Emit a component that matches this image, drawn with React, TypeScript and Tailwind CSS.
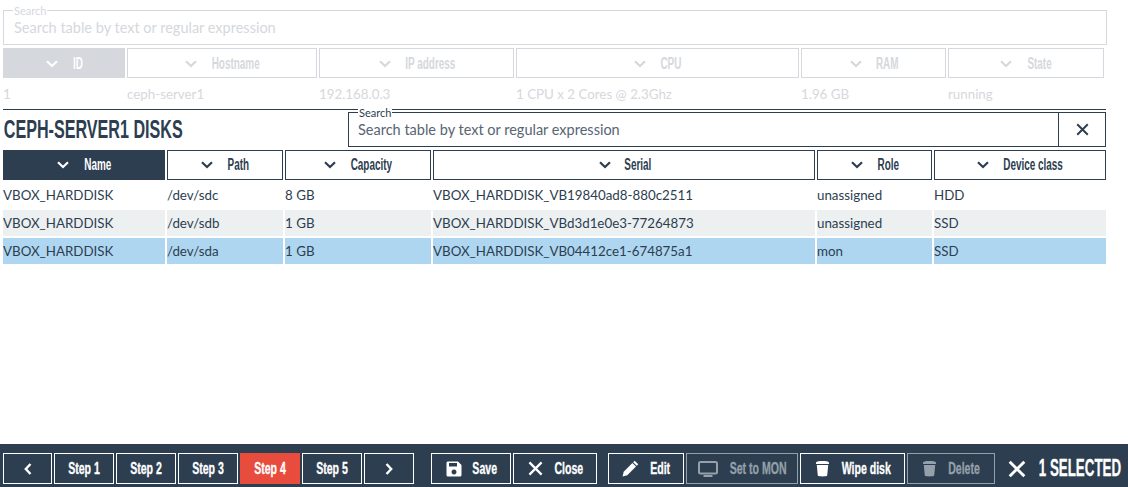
import React from "react";

const OSW = "font-['Liberation_Sans',sans-serif] font-bold";

/* Condensed display text: no condensed face is installed, so the label is narrowed; w is its visual width. */
function N({ w, children, s = "scale-x-[0.62]" }: { w: number; children: React.ReactNode; s?: string }) {
  return (
    <span className="inline-flex justify-center shrink-0" style={{ width: w }}>
      <span className={`inline-block whitespace-nowrap ${s}`}>{children}</span>
    </span>
  );
}

function Chevron({ className = "" }: { className?: string }) {
  return (
    <svg viewBox="0 0 12 8" className={`w-[12px] h-[8px] ${className}`} fill="none" stroke="currentColor" strokeWidth="2.2">
      <path d="M1 1.2 L6 6 L11 1.2" />
    </svg>
  );
}
function XIcon({ size = 16, sw = 2.4 }: { size?: number; sw?: number }) {
  return (
    <svg viewBox="0 0 16 16" width={size} height={size} fill="none" stroke="currentColor" strokeWidth={sw}>
      <path d="M1.5 1.5 L14.5 14.5 M14.5 1.5 L1.5 14.5" />
    </svg>
  );
}
function SaveIcon() {
  return (
    <svg viewBox="0 0 16 16" width="16" height="16" fill="currentColor">
      <path fillRule="evenodd" d="M1.5 0.5 H12 L15.5 4 V14 a1.5 1.5 0 0 1 -1.5 1.5 H2 a1.5 1.5 0 0 1 -1.5 -1.5 V2 a1.5 1.5 0 0 1 1 -1.5 Z M3 2 V5.5 H11 V2 Z M8 8.5 a2.5 2.5 0 1 0 0.01 0 Z" />
    </svg>
  );
}
function PencilIcon() {
  return (
    <svg viewBox="0 0 18 18" width="17" height="17" fill="currentColor">
      <path d="M13.4 0.8 L17.2 4.6 L15.6 6.2 L11.8 2.4 Z" />
      <path d="M11 3.2 L14.8 7 L5.6 16.2 L0.6 17.4 L1.8 12.4 Z" />
    </svg>
  );
}
function MonitorIcon() {
  return (
    <svg viewBox="0 0 20 16" width="20" height="16" fill="none" stroke="currentColor">
      <rect x="1" y="1" width="18" height="11.5" rx="1.5" strokeWidth="2" />
      <path d="M5.5 15 H14.5" strokeWidth="2" />
    </svg>
  );
}
function TrashIcon() {
  return (
    <svg viewBox="0 0 15 17" width="15" height="17" fill="currentColor">
      <path d="M1 2.4 C2 0.6 13 0.6 14 2.4 V4 H1 Z" />
      <path d="M1.8 5 H13.2 L12.2 15.6 C11.8 16.8 3.2 16.8 2.8 15.6 Z" />
    </svg>
  );
}

function Head({ label, tw, active, w, dim }: { label: string; tw: number; active?: boolean; w: string; dim?: boolean }) {
  const border = dim ? "border-[#d5d8dc] pt-[1px]" : "border-[#2c3e50]";
  const tone = active
    ? dim
      ? "bg-[#d5d8dc] text-white"
      : "bg-[#2c3e50] text-white"
    : dim
      ? "bg-white text-[#d5d8dc]"
      : "bg-white text-[#2c3e50]";
  return (
    <div className={`${w} h-[30px] border ${border} ${tone} flex items-center justify-center gap-[15px] ${OSW} text-[16px]`}>
      <Chevron />
      <N w={tw}>{label}</N>
    </div>
  );
}

function Cell({ w, children, bg }: { w: string; children: React.ReactNode; bg: string }) {
  return <div className={`${w} ${bg} h-[26px] pt-[1px] flex items-center whitespace-nowrap`}>{children}</div>;
}

const top = ["w-[122px]", "w-[190px]", "w-[195px]", "w-[283px]", "w-[145px]", "w-[156px]"];
const disk = ["w-[162px]", "w-[116px]", "w-[146px]", "w-[382px]", "w-[115px]", "w-[172px]"];
const rows = [
  { bg: "bg-white", c: ["VBOX_HARDDISK", "/dev/sdc", "8 GB", "VBOX_HARDDISK_VB19840ad8-880c2511", "unassigned", "HDD"] },
  { bg: "bg-[#ecf0f1]", c: ["VBOX_HARDDISK", "/dev/sdb", "1 GB", "VBOX_HARDDISK_VBd3d1e0e3-77264873", "unassigned", "SSD"] },
  { bg: "bg-[#aed6f1]", c: ["VBOX_HARDDISK", "/dev/sda", "1 GB", "VBOX_HARDDISK_VB04412ce1-674875a1", "mon", "SSD"] },
];

function Btn({ w, children, active, dis }: { w: string; children: React.ReactNode; active?: boolean; dis?: boolean }) {
  const tone = active
    ? "bg-[#e74c3c] border-[#e74c3c] text-white"
    : dis
      ? "border-[#95a0aa] text-[#95a0aa]"
      : "border-white text-white";
  return (
    <div className={`${w} h-[31px] border ${tone} flex items-center justify-center gap-[12px] ${OSW} text-[16px] [-webkit-text-stroke:0.3px_currentColor]`}>
      {children}
    </div>
  );
}

const BS = "scale-x-[0.66]";

export default function App() {
  return (
    <div className="w-[1128px] h-[487px] bg-white flex flex-col font-['Lato',sans-serif] text-[13.33px] text-[#2c3e50] overflow-hidden">
      <div className="flex-1 px-[3px] pt-[10px]">
        {/* Background, dimmed table */}
        <div className="relative w-[1104px] h-[35px] border border-[#d5d8dc] flex items-center pl-[10px] text-[#d5d8dc] text-[14.5px]">
          <span className="absolute left-[9px] -top-[6px] bg-white px-[1px] text-[11px] leading-[11px]">Search</span>
          Search table by text or regular expression
        </div>
        <div className="flex gap-[2px] mt-[3px]">
          {[["ID", 10], ["Hostname", 48], ["IP address", 49], ["CPU", 20], ["RAM", 21], ["State", 25]].map(([h, tw], i) => (
            <Head key={h as string} label={h as string} tw={tw as number} w={top[i]} active={i === 0} dim />
          ))}
        </div>
        <div className="flex gap-[2px] h-[31px] items-center pt-[2px] text-[#d5d8dc]">
          {["1", "ceph-server1", "192.168.0.3", "1 CPU x 2 Cores @ 2.3Ghz", "1.96 GB", "running"].map((t, i) => (
            <div key={t} className={top[i]}>{t}</div>
          ))}
        </div>
        <div className="w-[1103px] border-t border-[#2c3e50]" />

        {/* Title + search */}
        <div className="flex items-start justify-between w-[1103px] mt-[2px] h-[35px]">
          <div className={`${OSW} text-[26px] leading-[30px] uppercase pl-[1px] pt-[2px]`}>
            <N w={178} s="scale-x-[0.62]">ceph-server1 disks</N>
          </div>
          <div className="relative w-[758px] h-[35px] border border-[#2c3e50] flex">
            <span className="absolute left-[9px] -top-[6px] bg-white px-[1px] text-[11px] leading-[11px]">Search</span>
            <div className="flex-1 flex items-center pl-[9px] text-[14.5px] text-[#566573]">Search table by text or regular expression</div>
            <div className="w-[47px] border-l border-[#2c3e50] flex items-center justify-center">
              <XIcon size={13} />
            </div>
          </div>
        </div>

        {/* Disk table */}
        <div className="flex gap-[2px] mt-[3px]">
          {[["Name", 28], ["Path", 22], ["Capacity", 42], ["Serial", 24], ["Role", 20], ["Device class", 59]].map(([h, tw], i) => (
            <Head key={h as string} label={h as string} tw={tw as number} w={disk[i]} active={i === 0} />
          ))}
        </div>
        <div className="flex flex-col gap-[2px] mt-[2px]">
          {rows.map((r) => (
            <div key={r.c[3]} className="flex gap-[2px]">
              {r.c.map((t, i) => (
                <Cell key={i} w={disk[i]} bg={r.bg}>{t}</Cell>
              ))}
            </div>
          ))}
        </div>
      </div>

      {/* Toolbar */}
      <div className="h-[43px] bg-[#2c3e50] flex items-center pl-[3px] pt-[6px]">
        <div className="flex gap-[2px]">
          <Btn w="w-[49px]"><svg viewBox="0 0 8 12" width="8" height="12" fill="none" stroke="currentColor" strokeWidth="2.4"><path d="M6.5 1 L1.8 6 L6.5 11" /></svg></Btn>
          <Btn w="w-[60px]"><N w={32} s={BS}>Step 1</N></Btn>
          <Btn w="w-[60px]"><N w={32} s={BS}>Step 2</N></Btn>
          <Btn w="w-[60px]"><N w={32} s={BS}>Step 3</N></Btn>
          <Btn w="w-[60px]" active><N w={32} s={BS}>Step 4</N></Btn>
          <Btn w="w-[60px]"><N w={32} s={BS}>Step 5</N></Btn>
          <Btn w="w-[50px]"><svg viewBox="0 0 8 12" width="8" height="12" fill="none" stroke="currentColor" strokeWidth="2.4"><path d="M1.5 1 L6.2 6 L1.5 11" /></svg></Btn>
        </div>
        <div className="flex gap-[2px] ml-[17px]">
          <Btn w="w-[80px]"><SaveIcon /><N w={23} s={BS}>Save</N></Btn>
          <Btn w="w-[84px]"><XIcon size={15} /><N w={27} s={BS}>Close</N></Btn>
        </div>
        <div className="flex gap-[2px] ml-[11px]">
          <Btn w="w-[76px]"><PencilIcon /><N w={19} s={BS}>Edit</N></Btn>
          <Btn w="w-[112px]" dis><MonitorIcon /><N w={56} s={BS}>Set to MON</N></Btn>
          <Btn w="w-[105px]"><TrashIcon /><N w={48} s={BS}>Wipe disk</N></Btn>
          <Btn w="w-[88px]" dis><TrashIcon /><N w={31} s={BS}>Delete</N></Btn>
        </div>
        <div className="flex items-center gap-[13px] ml-[13px] text-white">
          <XIcon size={18} sw={2.6} />
          <span className={`${OSW} text-[23px] [-webkit-text-stroke:0.3px_currentColor]`}><N w={82} s="scale-x-[0.58]">1 SELECTED</N></span>
        </div>
      </div>
    </div>
  );
}
